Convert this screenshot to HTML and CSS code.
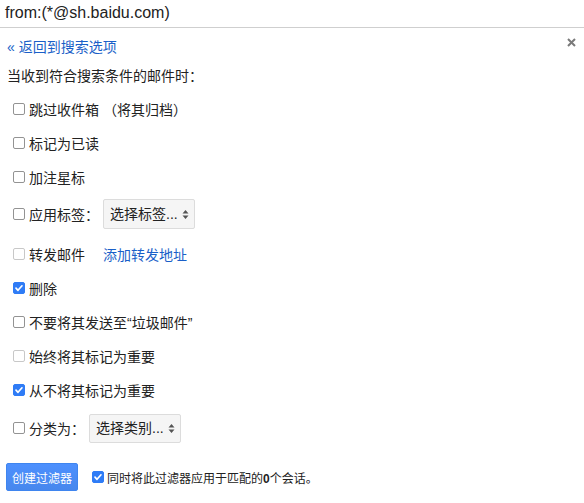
FILE: index.html
```html
<!DOCTYPE html>
<html lang="zh-CN">
<head>
<meta charset="utf-8">
<title>过滤器</title>
<link rel="stylesheet" href="styles.css">
</head>
<body>
<header class="query">from:(*@sh.baidu.com)</header>
<main class="panel">
  <button class="close" aria-label="关闭">
    <svg width="9" height="9" viewBox="0 0 9 9"><path d="M1 1L8 8M8 1L1 8" stroke="#7a7a7a" stroke-width="2"/></svg>
  </button>
  <a class="back" href="#">« 返回到搜索选项</a>
  <p class="intro">当收到符合搜索条件的邮件时：</p>
  <div class="rows">
    <label class="row"><input type="checkbox" class="cb"><span>跳过收件箱 （将其归档）</span></label>
    <label class="row"><input type="checkbox" class="cb"><span>标记为已读</span></label>
    <label class="row"><input type="checkbox" class="cb"><span>加注星标</span></label>
    <div class="row row-label"><input type="checkbox" class="cb"><span class="lbl">应用标签：</span><select class="sel sel-label"><option>选择标签...</option></select></div>
    <div class="row row-fwd"><input type="checkbox" class="cb" disabled><span class="lbl-fwd">转发邮件</span><a class="link" href="#">添加转发地址</a></div>
    <label class="row"><input type="checkbox" class="cb" checked><span>删除</span></label>
    <label class="row"><input type="checkbox" class="cb"><span>不要将其发送至“垃圾邮件”</span></label>
    <label class="row"><input type="checkbox" class="cb" disabled><span>始终将其标记为重要</span></label>
    <label class="row"><input type="checkbox" class="cb" checked><span>从不将其标记为重要</span></label>
    <div class="row row-cat"><input type="checkbox" class="cb"><span class="lbl">分类为：</span><select class="sel sel-cat"><option>选择类别...</option></select></div>
  </div>
  <div class="footer">
    <button class="create">创建过滤器</button>
    <label class="apply"><input type="checkbox" class="cb" checked><span>同时将此过滤器应用于匹配的<b>0</b>个会话。</span></label>
  </div>
</main>
</body>
</html>
```

FILE: styles.css
```css
html, body {
  margin: 0;
  padding: 0;
  background: #fff;
}
body {
  font-family: "Liberation Sans", "Noto Sans CJK SC", sans-serif;
  color: #222;
  font-size: 14px;
}
.query {
  height: 27px;
  line-height: 25px;
  padding: 0 5px;
  font-size: 16px;
  color: #222;
  border-bottom: 1px solid #cfcfcf;
}
.panel {
  position: relative;
  padding: 9px 7px 0 7px;
}
.close {
  position: absolute;
  top: 8px;
  right: 6px;
  width: 13px;
  height: 13px;
  padding: 0;
  border: 0;
  background: none;
  display: flex;
  align-items: center;
  justify-content: center;
}
.back {
  display: block;
  line-height: 20px;
  color: #1a5fc8;
  text-decoration: none;
  font-size: 14px;
}
.intro {
  margin: 9px 0 0 0;
  line-height: 20px;
}
.rows {
  margin-top: 6px;
  display: flex;
  flex-direction: column;
  padding-left: 6px;
}
.row {
  height: 34px;
  display: flex;
  align-items: center;
  gap: 4px;
}
.row-label {
  height: 40px;
}
.row-fwd {
  margin-top: 3px;
}
.row-cat {
  height: 42px;
}
.cb {
  appearance: none;
  -webkit-appearance: none;
  margin: 0;
  width: 12px;
  height: 12px;
  flex: none;
  border: 1px solid #939393;
  border-radius: 2px;
  background: #fff;
}
.cb:disabled {
  border-color: #c8c8c8;
}
.cb:checked {
  border-color: #2f7cf6;
  background: #2f7cf6 url("data:image/svg+xml;utf8,<svg xmlns='http://www.w3.org/2000/svg' width='12' height='12' viewBox='0 0 12 12'><path d='M3 6.2L5 8.3L9 3.8' fill='none' stroke='white' stroke-width='1.7' stroke-linecap='round' stroke-linejoin='round'/></svg>") center / 12px 12px no-repeat;
}
.lbl {
  margin-right: 0;
}
.lbl-fwd {
  margin-right: 14px;
}
.link {
  color: #1a5fc8;
  text-decoration: none;
}
.sel {
  appearance: none;
  -webkit-appearance: none;
  width: 92px;
  height: 30px;
  margin: 0;
  padding: 0 0 0 6px;
  font-family: "Liberation Sans", "Noto Sans CJK SC", sans-serif;
  font-size: 14px;
  color: #222;
  border: 1px solid #dcdcdc;
  border-radius: 2px;
  background: #f5f5f5 url("data:image/svg+xml;utf8,<svg xmlns='http://www.w3.org/2000/svg' width='7' height='11' viewBox='0 0 7 11'><path d='M0.5 4.5L3.5 1L6.5 4.5Z M0.5 6.5L3.5 10L6.5 6.5Z' fill='%23555'/></svg>") right 5px center / 7px 11px no-repeat;
}
.sel-cat {
  height: 29px;
}
.footer {
  margin-top: 14px;
  margin-left: -1px;
  display: flex;
  align-items: center;
  gap: 14px;
}
.create {
  width: 72px;
  height: 28px;
  padding: 0;
  font-family: "Liberation Sans", "Noto Sans CJK SC", sans-serif;
  font-size: 12px;
  color: #fff;
  border: 1px solid #3f85ef;
  border-radius: 2px;
  background: linear-gradient(#4d90fe, #4787ed);
}
.apply {
  display: flex;
  align-items: center;
  gap: 3px;
  font-size: 12px;
}
.apply b {
  font-weight: bold;
}
```
